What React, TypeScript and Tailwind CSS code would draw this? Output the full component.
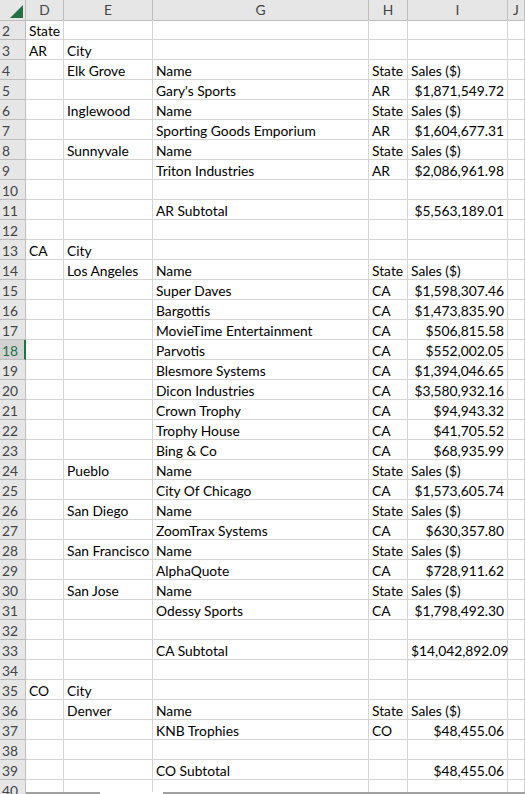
import React from "react";

type R = [string, string, string, string, string];
const rows: R[] = [
  ["State", "", "", "", ""],
  ["AR", "City", "", "", ""],
  ["", "Elk Grove", "Name", "State", "Sales ($)"],
  ["", "", "Gary's Sports", "AR", "$1,871,549.72"],
  ["", "Inglewood", "Name", "State", "Sales ($)"],
  ["", "", "Sporting Goods Emporium", "AR", "$1,604,677.31"],
  ["", "Sunnyvale", "Name", "State", "Sales ($)"],
  ["", "", "Triton Industries", "AR", "$2,086,961.98"],
  ["", "", "", "", ""],
  ["", "", "AR Subtotal", "", "$5,563,189.01"],
  ["", "", "", "", ""],
  ["CA", "City", "", "", ""],
  ["", "Los Angeles", "Name", "State", "Sales ($)"],
  ["", "", "Super Daves", "CA", "$1,598,307.46"],
  ["", "", "Bargottis", "CA", "$1,473,835.90"],
  ["", "", "MovieTime Entertainment", "CA", "$506,815.58"],
  ["", "", "Parvotis", "CA", "$552,002.05"],
  ["", "", "Blesmore Systems", "CA", "$1,394,046.65"],
  ["", "", "Dicon Industries", "CA", "$3,580,932.16"],
  ["", "", "Crown Trophy", "CA", "$94,943.32"],
  ["", "", "Trophy House", "CA", "$41,705.52"],
  ["", "", "Bing & Co", "CA", "$68,935.99"],
  ["", "Pueblo", "Name", "State", "Sales ($)"],
  ["", "", "City Of Chicago", "CA", "$1,573,605.74"],
  ["", "San Diego", "Name", "State", "Sales ($)"],
  ["", "", "ZoomTrax Systems", "CA", "$630,357.80"],
  ["", "San Francisco", "Name", "State", "Sales ($)"],
  ["", "", "AlphaQuote", "CA", "$728,911.62"],
  ["", "San Jose", "Name", "State", "Sales ($)"],
  ["", "", "Odessy Sports", "CA", "$1,798,492.30"],
  ["", "", "", "", ""],
  ["", "", "CA Subtotal", "", "$14,042,892.09"],
  ["", "", "", "", ""],
  ["CO", "City", "", "", ""],
  ["", "Denver", "Name", "State", "Sales ($)"],
  ["", "", "KNB Trophies", "CO", "$48,455.06"],
  ["", "", "", "", ""],
  ["", "", "CO Subtotal", "", "$48,455.06"],
  ["", "", "", "", ""],
];

const grid = "grid grid-cols-[26px_38px_89px_216px_39px_100px_17px]";
const cell = "h-[20px] border-r border-b border-[#d4d4d4] px-[3px] leading-[21px] whitespace-nowrap overflow-visible";

export default function App() {
  return (
    <div className="w-[525px] h-[794px] overflow-hidden bg-white text-[13.8px] text-black relative" style={{ fontFamily: "Lato, 'Open Sans', sans-serif" }}>
      <div className={grid + " h-[20px] bg-[#e6e6e6] text-[#444]"}>
        <div className="relative border-r border-b border-[#bdbdbd]">
          <svg className="absolute right-[2px] bottom-[2px]" width="13" height="13"><polygon points="13,0 13,13 0,13" fill="#217346" /></svg>
        </div>
        {["D", "E", "G", "H", "I", "J"].map((c) => (
          <div key={c} className="border-r border-b border-[#bdbdbd] text-center leading-[20px]">{c}</div>
        ))}
      </div>
      {rows.map((r, i) => {
        const n = i + 2;
        const sel = n === 18;
        const right = r[4].startsWith("$");
        return (
          <div key={n} className={grid}>
            <div className={"h-[20px] border-b leading-[21px] text-[#444] pl-[2px] " + (sel ? "bg-[#d2d2d2] border-r-2 border-r-[#217346] border-b-[#bdbdbd] text-[#217346]" : "bg-[#e6e6e6] border-r border-[#bdbdbd]")}>{n}</div>
            <div className={cell}>{r[0]}</div>
            <div className={cell}>{r[1]}</div>
            <div className={cell}>{r[2]}</div>
            <div className={cell}>{r[3]}</div>
            <div className={cell + (right ? " text-right" : "")}>{r[4]}</div>
            <div className={cell}></div>
          </div>
        );
      })}
      <div className="absolute left-[26px] right-0 bottom-0 h-[2px] flex">
        <div className="w-[74px] bg-[#a0a0a0]" />
        <div className="w-[63px] bg-white" />
        <div className="flex-1 bg-[#a0a0a0]" />
      </div>
    </div>
  );
}
